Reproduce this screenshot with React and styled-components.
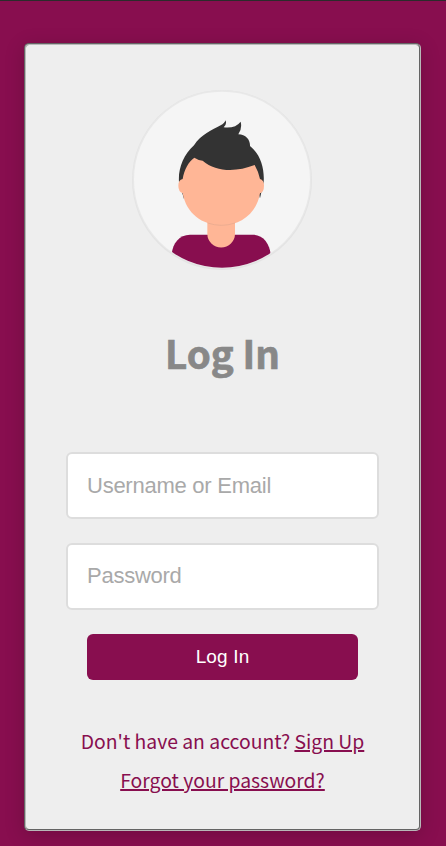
import React from 'react';
import styled, { createGlobalStyle } from 'styled-components';

const GlobalStyle = createGlobalStyle`
  *, *::before, *::after { box-sizing: border-box; }
  body {
    margin: 0;
    background: #880e4f;
    font-family: "Noto Sans CJK SC", "Noto Sans", sans-serif;
    overflow: hidden;
  }
`;

const Page = styled.main`
  min-height: 846px;
  padding: 42px 25px 15px 24px;
  border-top: 1px solid #2b2b2b;
`;

const Card = styled.form`
  display: flex;
  flex-direction: column;
  align-items: center;
  height: 788px;
  padding: 45px 40px 0;
  background: #eee;
  border: 2px groove #b8b8b8;
  border-radius: 5px;
  box-shadow: 0 4px 20px rgba(0, 0, 0, 0.18);
`;

const Avatar = styled.svg`
  display: block;
  width: 180px;
  height: 180px;
  margin-right: 2px;
  flex: none;
`;

const Title = styled.h1`
  margin: 52px 0 0;
  height: 60px;
  font-size: 38.5px;
  line-height: 60px;
  font-weight: 700;
  color: #888;
  -webkit-text-stroke: 0.7px #888;
  white-space: nowrap;
`;

const Fields = styled.div`
  display: flex;
  flex-direction: column;
  gap: 24px;
  width: 313px;
  margin-top: 70px;
`;

const Field = styled.input`
  width: 100%;
  height: 67px;
  padding: 0 19px ${(p) => p.$lift || 0}px;
  border: 2px solid #ddd;
  border-radius: 6px;
  background: #fff;
  font: 22px "Liberation Sans", Arial, sans-serif;
  letter-spacing: -0.25px;
  color: #333;
  outline: none;
  &::placeholder { color: #a9a9a9; opacity: 1; }
`;

const Submit = styled.button`
  width: 271px;
  height: 46px;
  margin-top: 24px;
  padding: 0;
  border: 0;
  border-radius: 6px;
  background: #880e4f;
  color: #fff;
  font: 19px "Liberation Sans", Arial, sans-serif;
  letter-spacing: 0.15px;
`;

const Links = styled.div`
  margin-top: 42px;
  text-align: center;
  font-size: 19.35px;
  line-height: 39px;
  color: #880e4f;
  white-space: nowrap;
`;

const Row = styled.p`
  margin: 0;
`;

const Link = styled.a`
  color: inherit;
  text-decoration: underline;
  text-decoration-thickness: 2px;
`;

function Portrait() {
  return (
    <Avatar viewBox="30 30 540 540" aria-label="User avatar">
      <defs>
        <clipPath id="disc"><circle cx="300" cy="299" r="264" /></clipPath>
      </defs>
      <circle cx="300" cy="300" r="270" fill="#e3e3e3" />
      <circle cx="300" cy="298" r="268" fill="#e8e8e8" />
      <circle cx="300" cy="299" r="264" fill="#f5f5f5" />
      <path clipPath="url(#disc)" fill="#880e4f" d="M149 580V522C152 490 172 464 204 464H391C423 464 443 490 446 524V580Z" />
      <path fill="#ffb696" d="M256 420H339V461A41.500 41.500 0 0 1 256 461Z" />
      <path fill="#333" d="M171 306C168 268 184 224 216 196C236 164 271 150 296 136Q308 130 310 121Q316 131 305 142Q340 146 356 125Q361 146 349 163C372 164 385 180 384 198C415 222 428 265 425 306L414 355L401 310L300 270L195 310L186 357Z" />
      <path fill="#ffb696" d="M182 297C187 268 199 246 217 233Q229 241 242 242C282 276 342 277 398 255Q410 276 414 297Q426 300 426 317Q426 336 414 340C405 397 359 436 299 436C240 436 193 400 182 340Q169 334 169 317Q169 299 182 297Z" />
      <path fill="none" stroke="#e3a78e" strokeWidth="2" d="M257 429Q298 443 339 429" />
    </Avatar>
  );
}

export default function App() {
  return (
    <>
      <GlobalStyle />
      <Page>
        <Card onSubmit={(e) => e.preventDefault()}>
          <Portrait />
          <Title>Log In</Title>
          <Fields>
            <Field type="text" placeholder="Username or Email" />
            <Field type="password" placeholder="Password" $lift={2} />
          </Fields>
          <Submit type="submit">Log In</Submit>
          <Links>
            <Row>Don't have an account? <Link href="#">Sign Up</Link></Row>
            <Row><Link href="#">Forgot your password?</Link></Row>
          </Links>
        </Card>
      </Page>
    </>
  );
}
